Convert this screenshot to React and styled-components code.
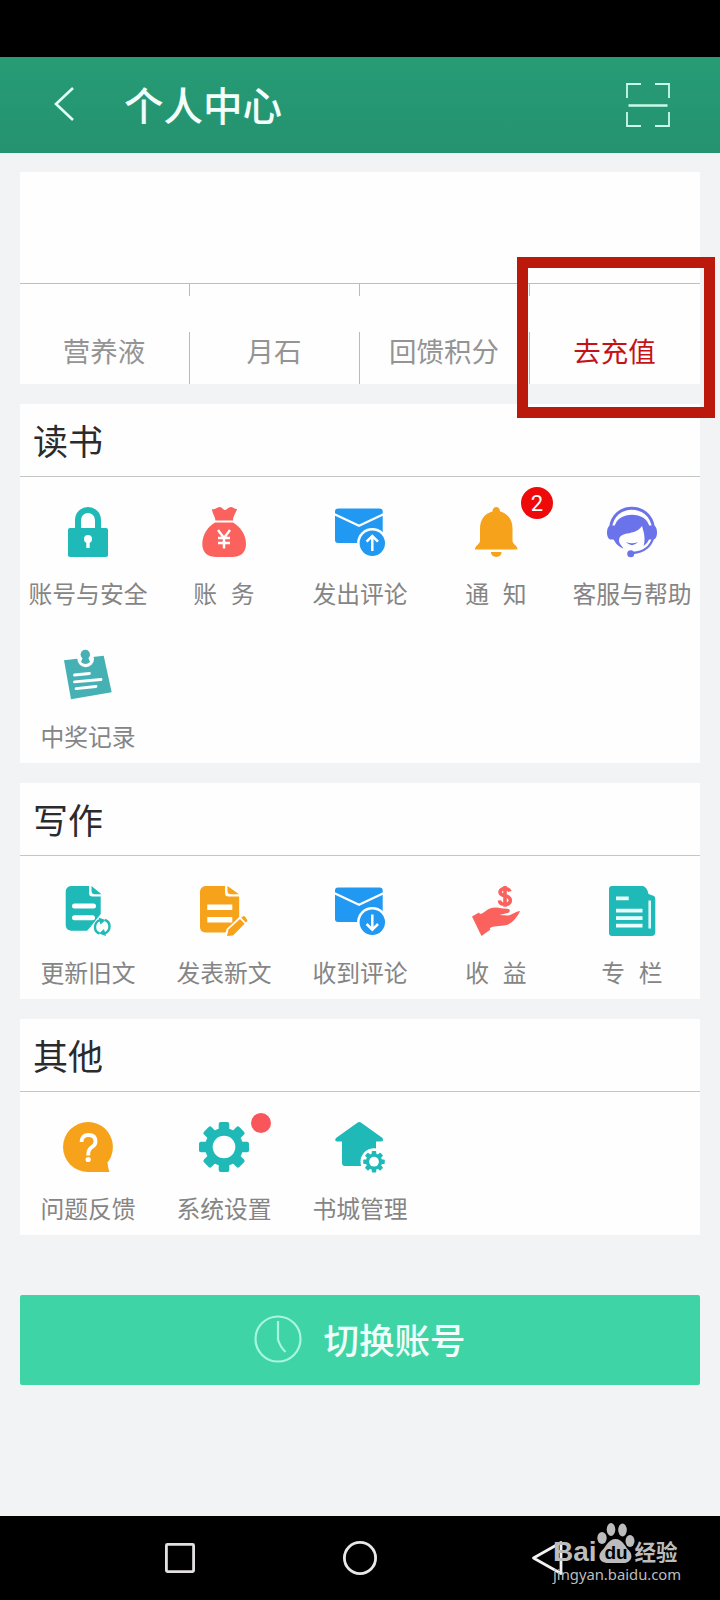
import React from 'react';
import styled, { createGlobalStyle } from 'styled-components';

const TEAL = '#1fb9b8';
const RED = '#fb625e';
const BLUE = '#2199f3';
const ORANGE = '#f6a31b';
const PURPLE = '#6b73ea';

const GlobalStyle = createGlobalStyle`
  * {
    box-sizing: border-box;
  }
  body {
    margin: 0;
    background: #f2f3f4;
    font-family: 'Noto Sans CJK SC', sans-serif;
  }
`;

const Screen = styled.div`
  position: relative;
  width: 720px;
  height: 1600px;
  display: flex;
  flex-direction: column;
  overflow: hidden;
`;

const StatusBar = styled.div`
  flex: none;
  height: 57px;
  background: #000;
`;

const Header = styled.header`
  flex: none;
  height: 96px;
  padding: 0 50px 0 52px;
  display: flex;
  align-items: center;
  background: linear-gradient(#269c75, #259270);
  h1 {
    flex: 1;
    margin: 0 0 0 48px;
    padding-bottom: 2px;
    color: #f2fffa;
    font-size: 39.5px;
    font-weight: 500;
    line-height: 60px;
  }
  .back {
    margin-bottom: 3px;
  }
`;

const Main = styled.main`
  flex: 1;
  padding: 19px 20px 0;
  display: flex;
  flex-direction: column;
  gap: 20px;
`;

const Card = styled.section`
  background: #fefefe;
`;

const Profile = styled.div`
  height: 112px;
  border-bottom: 1px solid #bcbfbe;
`;

const Assets = styled.div`
  height: 100px;
  display: grid;
  grid-template-columns: 169px 170px 170px 171px;
`;

const Asset = styled.div`
  padding: 0 1px 16px 0;
  display: flex;
  align-items: flex-end;
  justify-content: center;
  color: ${(props) => (props.$active ? '#c41219' : '#949494')};
  font-size: 27.5px;
  line-height: 36px;
  /* 구분선 중간이 비어 있음 */
  & + & {
    padding-right: 0;
    background: linear-gradient(
        #bbb 0 12px,
        transparent 12px 48px,
        #bbb 48px
      )
      no-repeat 0 0 / 1px 100%;
  }
`;

const SectionTitle = styled.h2`
  margin: 0;
  height: 73px;
  padding: 0 0 2px 13px;
  display: flex;
  align-items: center;
  border-bottom: 1px solid #c3c6c5;
  color: #2b2b2e;
  font-size: 35px;
  font-weight: 400;
`;

const Grid = styled.div`
  display: grid;
  grid-template-columns: repeat(5, 136px);
`;

const Entry = styled.div`
  position: relative;
  height: 143px;
  padding-top: 30px;
  display: flex;
  flex-direction: column;
  align-items: center;
  svg {
    flex: none;
    overflow: visible;
  }
  .label {
    margin-top: 18px;
    color: #858585;
    font-size: 23.8px;
    line-height: 36px;
    white-space: pre;
    word-spacing: 1.5px;
  }
`;

const Badge = styled.span`
  position: absolute;
  top: 10px;
  left: 93px;
  width: 32px;
  height: 32px;
  border-radius: 50%;
  background: #ee0a0a;
  color: #fff;
  font-family: Roboto, sans-serif;
  font-size: 22px;
  line-height: 33px;
  text-align: center;
`;

const Dot = styled.span`
  position: absolute;
  top: 21px;
  left: 95px;
  width: 20px;
  height: 20px;
  border-radius: 50%;
  background: #f9565c;
`;

const SwitchButton = styled.button`
  margin-top: 40px;
  height: 90px;
  padding: 0 0 2px;
  display: flex;
  align-items: center;
  justify-content: center;
  gap: 21px;
  border: none;
  border-radius: 2px;
  background: #3fd4a6;
  color: #f0fff9;
  font-family: inherit;
  font-size: 35.5px;
  font-weight: 500;
  line-height: 50px;
`;

const NavBar = styled.nav`
  flex: none;
  height: 84px;
  padding-left: 162px;
  display: grid;
  grid-template-columns: 180px 187px 36px;
  align-items: center;
  background: #000;
`;

const Highlight = styled.div`
  position: absolute;
  top: 257px;
  left: 517px;
  width: 198px;
  height: 161px;
  border: 11px solid #bb190b;
`;

const Watermark = styled.div`
  position: absolute;
  left: 553px;
  top: 1522px;
  color: #bcbcbc;
  .logo {
    height: 42px;
    display: flex;
    align-items: flex-end;
  }
  .bai {
    margin-bottom: -4px;
    font: bold 28px/32px 'Liberation Sans', sans-serif;
  }
  .cn {
    font-size: 21.5px;
    font-weight: 700;
    line-height: 27px;
  }
  .url {
    font: 14.8px/20px 'Noto Sans', sans-serif;
  }
`;

const Icon = ({ color, children }) => (
  <svg width="50" height="50" viewBox="0 0 50 50" fill={color}>
    {children}
  </svg>
);

const LockIcon = () => (
  <Icon color={TEAL}>
    <path d="M15 23V13a10 10 0 0 1 20 0v10" fill="none" stroke={TEAL} strokeWidth="6" />
    <rect x="5" y="21" width="40" height="29" rx="2" />
    <circle cx="25" cy="32" r="4" fill="#fff" />
    <path d="M23.3 33h3.4v8h-3.4z" fill="#fff" />
  </Icon>
);

const BagIcon = () => (
  <Icon color={RED}>
    <path d="M13 2c4 1 5-2 8-2 2 0 3 3 5 3s3-3 6-3c2 0 3 2 6 2-1 4-4 7-4 11.500H16.500C16 9 13 6 13 2z" />
    <path d="M16 15.500h18c7 4 13 12 13 21.500 0 9-6 13-14 13H17.500C9 50 3.300 46 3.300 37 3.300 27.500 9 19.500 16 15.500z" />
    <path d="M19 23l6 8 6-8M25 31v10.500M19 31h12M19 36h12" fill="none" stroke="#fff" strokeWidth="2.500" />
  </Icon>
);

const MailIcon = ({ down }) => (
  <Icon color={BLUE}>
    <rect x="0" y="1.500" width="47.700" height="34.500" rx="3" />
    <path d="M-1 7l25 11.700L49 7" fill="none" stroke="#fff" strokeWidth="2.200" />
    <circle cx="37.300" cy="36.300" r="15.300" fill="#fff" />
    <circle cx="37.300" cy="36.300" r="12.700" />
    <path
      d={down ? 'M37.300 28.500v15M31.600 38l5.700 5.700 5.700-5.700' : 'M37.300 44V29M31.600 34.700l5.700-5.700 5.700 5.700'}
      fill="none"
      stroke="#fff"
      strokeWidth="2.500"
    />
  </Icon>
);

const BellIcon = () => (
  <Icon color={ORANGE}>
    <path d="M21.500 4.500C21.500-1.500 29-1.500 29 4.500c8 2 12.500 8.500 12.500 17V34c0 3 5 4.500 5 8.500H4c0-4 5-5.500 5-8.500V21.500c0-8.500 4.500-15 12.500-17z" />
    <path d="M20 45h10.500c0 6.500-10.500 6.500-10.500 0z" />
  </Icon>
);

const ServiceIcon = () => (
  <Icon color={PURPLE}>
    <path d="M3.500 21C6-5.500 43.500-5.500 46.500 21" fill="none" stroke={PURPLE} strokeWidth="3" />
    <path d="M8 18.500H3Q0 20 0 25.500T3 32.500h6zM42 18.500h5Q50 20 50 25.500T47 32.500h-6z" />
    <path d="M7.500 20C10 3.500 40 3.500 42.500 20v11c-1 3-3 6-6 8 2-6 1-12-1.500-20-4 6-12 7-17 8-4 1-6 3-6 6 0 4 3 6 4.500 8.500C11 40 7.500 35 6 31z" />
    <path d="M19 35q6 2.500 12 0-6 6.500-12 0z" />
    <path d="M46 31c-2 8-9 14-20 15" fill="none" stroke={PURPLE} strokeWidth="2.400" />
    <circle cx="23.700" cy="46.700" r="3.500" />
  </Icon>
);

const NoteIcon = () => (
  <Icon color="#46b1b5">
    <path d="M1 10.300L40.700 5.700l8 36.600L8 49.300z" />
    <circle cx="22.700" cy="9" r="8.300" fill="#fff" />
    <circle cx="22.300" cy="4.500" r="4.700" />
    <path d="M20 7h5l2 5q-4.500 4-9 0z" />
    <path d="M11.500 25l15-1.500M11.500 31.800L38 29.500M13 38.700l20-2.200" stroke="#fff" strokeWidth="2.800" strokeLinecap="round" />
  </Icon>
);

const UpdateDocIcon = () => (
  <Icon color={TEAL}>
    <path d="M8 0h18v7q0 3.500 3.500 3.500h8.200V28L27 41.500 24 44.700H8Q2.700 44 2.700 39V5.500Q3 .500 8 0z" />
    <path d="M28.500 0l10 8.300H32q-3.500 0-3.500-3.500z" />
    <path d="M11.500 20h19M11.500 31.700h18" stroke="#fff" strokeWidth="5" strokeLinecap="round" />
    <path d="M37 34q-5 2-5 7t4.500 6.500M41.500 47.500q5-2 5-7T42 34" fill="none" stroke={TEAL} strokeWidth="2.400" />
    <path d="M35.500 31.500l7 2.500-5 4.500zM43 50l-7-2.500 5-4.500z" />
  </Icon>
);

const NewDocIcon = () => (
  <Icon color={ORANGE}>
    <path d="M6.500 0H26v7q0 3.500 3.500 3.500h10.700V31L26 46.500H6.500Q1 46 1 41V5.500Q1.500.500 6.500 0z" />
    <path d="M28.500 0l11.500 8.300H32q-3.500 0-3.500-3.500z" />
    <path d="M8.300 21.300h25M8.300 33.800h25" stroke="#fff" strokeWidth="5.400" />
    <path d="M26.500 50l1-7L41 30.500l7 7L34 50z" fill="#fff" />
    <path d="M28 50l1.500-6.500L41 33l4.700 4.700L34 49.500z" />
    <path d="M42.200 31.800l2.300-1.800q2 0 4 5l-1.700 1.600z" />
  </Icon>
);

const IncomeIcon = () => (
  <Icon color={RED}>
    <path d="M39 5.500q-1-3-5-3t-5 3.300q0 3 5 4t5.300 4.500q0 4-5.300 4t-5.500-4M34 0v20.700" fill="none" stroke={RED} strokeWidth="3.600" />
    <path d="M1 30.500l7-4 11.500 17-9 6.500-2-4z" />
    <path d="M8.500 28c5 0 7-6.500 16-6.500 5 0 7 1.500 12 1.300 3 0 3 3.700 0 4.200l-8 2 9 .500c5-1.500 7-4 11.500-4.500-2 5-7 12-13.500 14-7 1.500-13 0-18.500 4.500z" />
  </Icon>
);

const ColumnIcon = () => (
  <Icon color={TEAL}>
    <path d="M5 0h31q4 1 5.500 8l5.500 2q1.300 1 1.300 3V46q0 4-4 4H5q-3 0-3-3V3q0-3 3-3z" />
    <path d="M9 12.300h12.700M9 24.700h26.500M9 32.200h26.500M9 39.700h26.500" stroke="#eaffff" strokeWidth="3.800" />
    <path d="M42.700 14.500v28" stroke="#dffcfc" strokeWidth="2.600" />
  </Icon>
);

const QuestionIcon = () => (
  <Icon color={ORANGE}>
    <path d="M25 0a25 25 0 0 1 19.500 40.500q.500 6 2 9.500H25A25 25 0 0 1 25 0z" />
    <path d="M18.500 20q0-7 7-7t7 6.500q0 3.500-3.500 5.500-4 2.500-3.800 8.500" fill="none" stroke="#fff" strokeWidth="3.800" />
    <circle cx="25.200" cy="37.500" r="2.600" fill="#fff" />
  </Icon>
);

// 톱니 8개짜리 기어, 중심은 (0, 0)
const Gear = () => (
  <g>
    {[0, 45, 90, 135].map((deg) => (
      <rect key={deg} x="-5.300" y="-25" width="10.600" height="50" rx="2" transform={`rotate(${deg})`} />
    ))}
    <circle r="19" />
    <circle r="11.300" fill="#fff" />
  </g>
);

const SettingIcon = () => (
  <Icon color={TEAL}>
    <g transform="translate(25 25)">
      <Gear />
    </g>
  </Icon>
);

const StoreIcon = () => (
  <Icon color={TEAL}>
    <path d="M22 1q2.300-2 4.600 0L47.500 16q1.500 3.500-1.500 3.500h-5V44H10q-3 0-3-3V19.500H2Q-1 19 1 16z" />
    <circle cx="39" cy="39.700" r="13.500" fill="#fff" />
    <g transform="translate(39 39.700) scale(.43)">
      <Gear />
    </g>
  </Icon>
);

const sections = [
  {
    title: '读书',
    entries: [
      { label: '账号与安全', icon: <LockIcon /> },
      { label: '账  务', icon: <BagIcon /> },
      { label: '发出评论', icon: <MailIcon /> },
      { label: '通  知', icon: <BellIcon />, count: 2 },
      { label: '客服与帮助', icon: <ServiceIcon /> },
      { label: '中奖记录', icon: <NoteIcon /> },
    ],
  },
  {
    title: '写作',
    entries: [
      { label: '更新旧文', icon: <UpdateDocIcon /> },
      { label: '发表新文', icon: <NewDocIcon /> },
      { label: '收到评论', icon: <MailIcon down /> },
      { label: '收  益', icon: <IncomeIcon /> },
      { label: '专  栏', icon: <ColumnIcon /> },
    ],
  },
  {
    title: '其他',
    entries: [
      { label: '问题反馈', icon: <QuestionIcon /> },
      { label: '系统设置', icon: <SettingIcon />, dot: true },
      { label: '书城管理', icon: <StoreIcon /> },
    ],
  },
];

const App = () => {
  return (
    <Screen>
      <GlobalStyle />
      <StatusBar />
      <Header>
        <svg className="back" width="24" height="36" viewBox="0 0 24 36" fill="none" stroke="#dffff4" strokeWidth="2.600">
          <path d="M21 2L4 18 21 34" />
        </svg>
        <h1>个人中心</h1>
        <svg width="44" height="44" viewBox="0 0 44 44" fill="none" stroke="#c9fbe9" strokeWidth="1.800">
          <path d="M1 15V1h14M29 1h14v14M43 29v14H29M15 43H1V29" />
          <path d="M2.500 22.500h39" strokeWidth="2.400" />
        </svg>
      </Header>
      <Main>
        <Card>
          <Profile />
          <Assets>
            <Asset>营养液</Asset>
            <Asset>月石</Asset>
            <Asset>回馈积分</Asset>
            <Asset $active>去充值</Asset>
          </Assets>
        </Card>
        {sections.map((section) => (
          <Card key={section.title}>
            <SectionTitle>{section.title}</SectionTitle>
            <Grid>
              {section.entries.map((entry) => (
                <Entry key={entry.label}>
                  {entry.icon}
                  <div className="label">{entry.label}</div>
                  {entry.count && <Badge>{entry.count}</Badge>}
                  {entry.dot && <Dot />}
                </Entry>
              ))}
            </Grid>
          </Card>
        ))}
        <SwitchButton>
          <svg width="48" height="48" viewBox="0 0 48 48" fill="none" stroke="#a9f6dc" strokeWidth="2.200">
            <circle cx="24" cy="24" r="22.500" />
            <path d="M24 6v18.500q2 7 7.500 12.500" />
          </svg>
          切换账号
        </SwitchButton>
      </Main>
      <NavBar>
        <svg width="36" height="36" fill="none" stroke="#e4e0e2" strokeWidth="2.800">
          <rect x="4.400" y="4.400" width="27.200" height="27.200" rx="1" />
        </svg>
        <svg width="36" height="36" fill="none" stroke="#e8e8e8" strokeWidth="2.800">
          <circle cx="18" cy="18" r="15.600" />
        </svg>
        <svg width="36" height="36" fill="none" stroke="#f2f2f2" strokeWidth="2.800">
          <path d="M4.500 18L32 2.500v31z" strokeLinejoin="round" />
        </svg>
      </NavBar>
      <Highlight />
      <Watermark>
        <div className="logo">
          <span className="bai">Bai</span>
          <svg width="38" height="42" viewBox="0.500 0 38 42" fill="#bcbcbc">
            <ellipse cx="5.500" cy="16" rx="4.700" ry="6" />
            <ellipse cx="14.500" cy="7.500" rx="4.300" ry="6.500" />
            <ellipse cx="26" cy="8" rx="4.300" ry="6.500" />
            <ellipse cx="33.500" cy="19" rx="4.500" ry="6" />
            <path d="M19 17c7 0 9 7 13 11 6 6 2 13-5 13H12C3 41 0 34 6 28c4-4 6-11 13-11z" />
            <text x="19.500" y="37" textAnchor="middle" fill="#000" fontFamily="Liberation Sans, sans-serif" fontSize="19" fontWeight="700">
              du
            </text>
          </svg>
          <span className="cn">经验</span>
        </div>
        <div className="url">jingyan.baidu.com</div>
      </Watermark>
    </Screen>
  );
};

export default App;
